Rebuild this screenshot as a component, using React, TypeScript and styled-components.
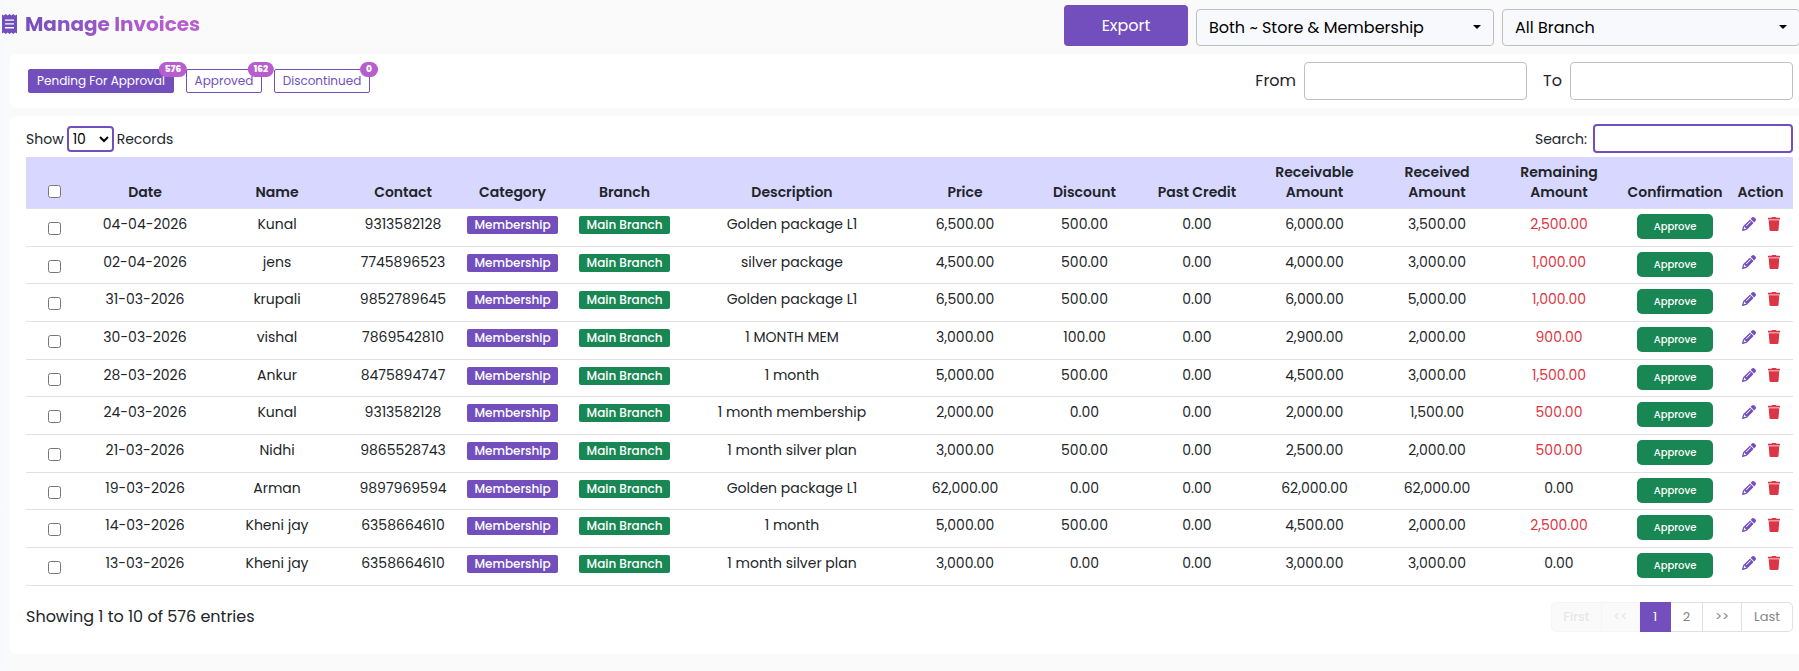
import React from "react";
import styled, { createGlobalStyle } from "styled-components";
import { FaPencil } from "react-icons/fa6";

const purple = "#734fbe";
const orchid = "#b75dcd";
const green = "#198754";
const red = "#dc3545";

const Global = createGlobalStyle`
  *, *::before, *::after { box-sizing: border-box; }
  body {
    margin: 0;
    background: #fafafa;
    color: #212529;
    font-family: Poppins, Inter, sans-serif;
    font-size: 14px;
    line-height: 20px;
    overflow-x: hidden;
  }
  button, input, select { font: inherit; margin: 0; }
`;

const Page = styled.div`
  min-height: 100vh;
  padding-left: 10px;
  background: linear-gradient(90deg, #f7f9fc, #fafafa) left / 10px 100% no-repeat;
`;

const Header = styled.header`
  display: flex;
  justify-content: space-between;
  height: 54px;
  margin-right: -1px;
  padding-top: 5px;
`;

const Title = styled.h1`
  display: flex;
  align-items: center;
  gap: 8px;
  height: 38px;
  margin: 0 0 0 -8px;
  font-size: 20px;
  line-height: 28px;
  font-weight: 700;
  color: ${purple};

  span {
    background: linear-gradient(90deg, ${purple}, ${orchid} 75%);
    background-clip: text;
    color: transparent;
  }
`;

const HeaderTools = styled.div`
  display: flex;
  align-items: flex-start;
  gap: 8px;
`;

const ExportButton = styled.button`
  width: 124px;
  height: 41px;
  border: 0;
  border-radius: 4px;
  background: ${purple};
  color: #fff;
  font-size: 16px;
`;

const SelectBox = styled.div<{ $width: number }>`
  position: relative;
  width: ${(p) => p.$width}px;
  margin-top: 4px;

  select {
    appearance: none;
    width: 100%;
    height: 37px;
    padding: 0 12px;
    border: 1px solid #bfbfbf;
    border-radius: 4px;
    background: #f8f9fc;
    color: #000;
    font-size: 16px;
  }

  &::after {
    content: "";
    position: absolute;
    top: 16px;
    right: 13px;
    border: 4px solid transparent;
    border-top-color: #000;
    border-bottom: 0;
    pointer-events: none;
  }
`;

const Card = styled.section`
  margin-bottom: 8px;
  padding: 0 6px 0 16px;
  border-radius: 6px 0 0 6px;
  background: #fff;
`;

const FilterCard = styled(Card)`
  display: flex;
  justify-content: space-between;
  align-items: center;
  height: 54px;
`;

const Tabs = styled.div`
  display: flex;
  gap: 12px;
  padding-left: 2px;
`;

const Tab = styled.button<{ $active?: boolean; $width: number }>`
  position: relative;
  width: ${(p) => p.$width}px;
  height: 24px;
  padding: 0;
  border: 1px solid ${purple};
  border-radius: 2px;
  background: ${(p) => (p.$active ? purple : "#fff")};
  color: ${(p) => (p.$active ? "#fff" : purple)};
  font-size: 12px;
  white-space: nowrap;
`;

const Count = styled.span`
  position: absolute;
  top: -8px;
  left: 100%;
  transform: translateX(-50%);
  padding: 0 6px;
  border-radius: 8px;
  background: ${orchid};
  color: #fff;
  font-size: 9px;
  line-height: 15px;
  font-weight: 800;
`;

const Dates = styled.div`
  display: flex;
  align-items: center;
  gap: 16px;
  font-size: 16px;
`;

const Field = styled.label`
  display: flex;
  align-items: center;
  gap: 8px;
`;

const SearchField = styled(Field)`
  gap: 6px;
`;

const DateInput = styled.input`
  width: 223px;
  height: 38px;
  padding: 0 12px;
  border: 1px solid #bfbfbf;
  border-radius: 4px;
  background: #fff;
`;

const TableCard = styled(Card)`
  margin-bottom: 0;
  padding-bottom: 22px;
`;

const TableTools = styled.div`
  display: flex;
  justify-content: space-between;
  align-items: center;
  height: 41px;
  padding-top: 4px;
`;

const LengthField = styled.label`
  display: flex;
  align-items: center;
  gap: 3px;

  select {
    width: 47px;
    height: 26px;
    border: 2px solid ${purple};
    border-radius: 4px;
    background: #fff;
    color: #000;
  }
`;

const SearchInput = styled.input`
  width: 200px;
  height: 29px;
  padding: 0 8px;
  border: 2px solid ${purple};
  border-radius: 4px;
  background: #fff;
`;

const Table = styled.table`
  width: 100%;
  table-layout: fixed;
  border-collapse: separate;
  border-spacing: 0;
  text-align: center;

  th {
    height: 52px;
    padding: 5px 0 6px;
    border-bottom: 1px solid #dee2e6;
    background: #d8d7ff;
    font-weight: 600;
    vertical-align: bottom;
  }

  td {
    height: 38px;
    padding: 5px 0 0;
    border-bottom: 1px solid #dee2e6;
    vertical-align: top;
    white-space: nowrap;
  }

  th:last-child, td:last-child { padding-right: 4px; }

  tbody tr:nth-child(3n + 2) td { height: 37px; }
`;

const Check = styled.input`
  display: block;
  width: 13px;
  height: 13px;
  margin: 8px auto 0;

  th & { margin-bottom: 4px; }
`;

const Badge = styled.span<{ $color: string }>`
  display: block;
  width: 91px;
  height: 18px;
  margin: 2px auto 0;
  border-radius: 2px;
  background: ${(p) => p.$color};
  color: #fff;
  font-size: 12px;
  line-height: 18px;
  font-weight: 500;
`;

const Money = styled.td<{ $due: boolean }>`
  color: ${(p) => (p.$due ? red : "inherit")};
`;

const ApproveButton = styled.button`
  display: block;
  width: 76px;
  height: 25px;
  margin: 0 auto;
  padding: 0;
  border: 0;
  border-radius: 5px;
  background: ${green};
  color: #fff;
  font-size: 10px;
  font-weight: 500;
`;

const Actions = styled.div`
  display: flex;
  justify-content: center;
  gap: 12px;
  padding-top: 3px;
`;

const IconButton = styled.button<{ $color: string }>`
  display: flex;
  padding: 0;
  border: 0;
  background: none;
  color: ${(p) => p.$color};
`;

const Footer = styled.div`
  display: flex;
  justify-content: space-between;
  padding-top: 16px;
`;

const Info = styled.p`
  margin: 0;
  font-size: 16px;
  line-height: 30px;
`;

const Pager = styled.nav`
  display: flex;
`;

const PageButton = styled.button<{ $width: number; $active?: boolean }>`
  width: ${(p) => p.$width}px;
  height: 30px;
  padding: 0;
  border: 1px solid ${(p) => (p.$active ? purple : "#dee2e6")};
  border-left-width: 0;
  background: ${(p) => (p.$active ? purple : "#fff")};
  color: ${(p) => (p.$active ? "#fff" : "#858585")};
  font-size: 13px;

  &:disabled {
    border-color: #f5f5f5;
    background: #fafafa;
    color: #e4e5e7;
  }
  &:first-child { border-left-width: 1px; border-radius: 5px 0 0 5px; }
  &:last-child { border-radius: 0 5px 5px 0; }
`;

const ReceiptIcon = () => (
  <svg width="15" height="20" viewBox="0 0 15 20" fill="currentColor" aria-hidden="true">
    <path
      fillRule="evenodd"
      d="M0 0.4 L1.8 1.6 L3.7 0 L5.6 1.6 L7.5 0 L9.4 1.6 L11.3 0 L13.2 1.6 L15 0.4 V19.6 L13.2 18.4 L11.3 20 L9.4 18.4 L7.5 20 L5.6 18.4 L3.7 20 L1.8 18.4 L0 19.6 Z M3 5.5 V6.8 H12 V5.5 Z M3 9.3 V10.6 H12 V9.3 Z M3 13.1 V14.4 H12 V13.1 Z"
    />
  </svg>
);

const TrashIcon = () => (
  <svg width="12" height="14" viewBox="0 0 12 14" fill="currentColor" aria-hidden="true">
    <path d="M4 0 H8 L8.4 0.7 H11.6 Q12 0.7 12 1.1 V2.5 H0 V1.1 Q0 0.7 0.4 0.7 H3.6 Z" />
    <path d="M0.7 3.3 H11.3 L10.5 13 Q10.4 14 9.4 14 H2.6 Q1.6 14 1.5 13 Z" />
  </svg>
);

const columns: [string, number][] = [
  ["Date", 126],
  ["Name", 138],
  ["Contact", 114],
  ["Category", 105],
  ["Branch", 119],
  ["Description", 216],
  ["Price", 130],
  ["Discount", 109],
  ["Past Credit", 116],
  ["Receivable Amount", 119],
  ["Received Amount", 126],
  ["Remaining Amount", 118],
  ["Confirmation", 114],
  ["Action", 61],
];

const twoLine = (label: string) => {
  if (!label.endsWith(" Amount")) return label;
  return (
    <>
      {label.replace(" Amount", "")}
      <br />
      Amount
    </>
  );
};

// date, name, contact, description, price, discount, receivable, received, remaining
const invoices = [
  ["04-04-2026", "Kunal", "9313582128", "Golden package L1", "6,500.00", "500.00", "6,000.00", "3,500.00", "2,500.00"],
  ["02-04-2026", "jens", "7745896523", "silver package", "4,500.00", "500.00", "4,000.00", "3,000.00", "1,000.00"],
  ["31-03-2026", "krupali", "9852789645", "Golden package L1", "6,500.00", "500.00", "6,000.00", "5,000.00", "1,000.00"],
  ["30-03-2026", "vishal", "7869542810", "1 MONTH MEM", "3,000.00", "100.00", "2,900.00", "2,000.00", "900.00"],
  ["28-03-2026", "Ankur", "8475894747", "1 month", "5,000.00", "500.00", "4,500.00", "3,000.00", "1,500.00"],
  ["24-03-2026", "Kunal", "9313582128", "1 month membership", "2,000.00", "0.00", "2,000.00", "1,500.00", "500.00"],
  ["21-03-2026", "Nidhi", "9865528743", "1 month silver plan", "3,000.00", "500.00", "2,500.00", "2,000.00", "500.00"],
  ["19-03-2026", "Arman", "9897969594", "Golden package L1", "62,000.00", "0.00", "62,000.00", "62,000.00", "0.00"],
  ["14-03-2026", "Kheni jay", "6358664610", "1 month", "5,000.00", "500.00", "4,500.00", "2,000.00", "2,500.00"],
  ["13-03-2026", "Kheni jay", "6358664610", "1 month silver plan", "3,000.00", "0.00", "3,000.00", "3,000.00", "0.00"],
];

export default function App() {
  return (
    <Page>
      <Global />
      <Header>
        <Title>
          <ReceiptIcon />
          <span>Manage Invoices</span>
        </Title>
        <HeaderTools>
          <ExportButton type="button">Export</ExportButton>
          <SelectBox $width={298}>
            <select aria-label="Invoice type">
              <option>Both ~ Store &amp; Membership</option>
            </select>
          </SelectBox>
          <SelectBox $width={298}>
            <select aria-label="Branch">
              <option>All Branch</option>
            </select>
          </SelectBox>
        </HeaderTools>
      </Header>

      <FilterCard>
        <Tabs>
          <Tab type="button" $active $width={146}>
            Pending For Approval<Count>576</Count>
          </Tab>
          <Tab type="button" $width={76}>
            Approved<Count>162</Count>
          </Tab>
          <Tab type="button" $width={96}>
            Discontinued<Count>0</Count>
          </Tab>
        </Tabs>
        <Dates>
          <Field>
            From
            <DateInput type="text" />
          </Field>
          <Field>
            To
            <DateInput type="text" />
          </Field>
        </Dates>
      </FilterCard>

      <TableCard>
        <TableTools>
          <LengthField>
            Show
            <select defaultValue="10">
              <option>10</option>
            </select>
            Records
          </LengthField>
          <SearchField>
            Search:
            <SearchInput type="search" />
          </SearchField>
        </TableTools>

        <Table>
          <colgroup>
            <col width={56} />
            {columns.map(([label, width]) => (
              <col key={label} width={width} />
            ))}
          </colgroup>
          <thead>
            <tr>
              <th>
                <Check type="checkbox" aria-label="Select all invoices" />
              </th>
              {columns.map(([label]) => (
                <th key={label}>{twoLine(label)}</th>
              ))}
            </tr>
          </thead>
          <tbody>
            {invoices.map(([date, name, contact, text, price, discount, receivable, received, remaining]) => (
              <tr key={date}>
                <td>
                  <Check type="checkbox" aria-label={`Select invoice of ${date}`} />
                </td>
                <td>{date}</td>
                <td>{name}</td>
                <td>{contact}</td>
                <td>
                  <Badge $color={purple}>Membership</Badge>
                </td>
                <td>
                  <Badge $color={green}>Main Branch</Badge>
                </td>
                <td>{text}</td>
                <td>{price}</td>
                <td>{discount}</td>
                <td>0.00</td>
                <td>{receivable}</td>
                <td>{received}</td>
                <Money $due={remaining !== "0.00"}>{remaining}</Money>
                <td>
                  <ApproveButton type="button">Approve</ApproveButton>
                </td>
                <td>
                  <Actions>
                    <IconButton type="button" $color={purple} aria-label="Edit">
                      <FaPencil size={14} />
                    </IconButton>
                    <IconButton type="button" $color={red} aria-label="Delete">
                      <TrashIcon />
                    </IconButton>
                  </Actions>
                </td>
              </tr>
            ))}
          </tbody>
        </Table>

        <Footer>
          <Info>Showing 1 to 10 of 576 entries</Info>
          <Pager aria-label="Invoice pages">
            <PageButton type="button" $width={51} disabled>First</PageButton>
            <PageButton type="button" $width={38} disabled>&lt;&lt;</PageButton>
            <PageButton type="button" $width={31} $active>1</PageButton>
            <PageButton type="button" $width={32}>2</PageButton>
            <PageButton type="button" $width={39}>&gt;&gt;</PageButton>
            <PageButton type="button" $width={51}>Last</PageButton>
          </Pager>
        </Footer>
      </TableCard>
    </Page>
  );
}
